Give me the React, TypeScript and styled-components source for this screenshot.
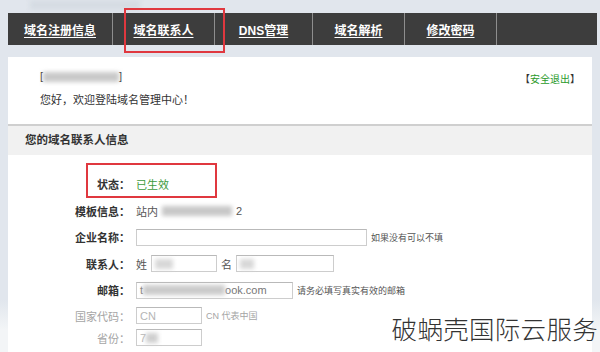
import React from "react"
import styled, { createGlobalStyle } from "styled-components"

const GlobalStyle = createGlobalStyle`
  html, body {
    margin: 0;
    padding: 0;
  }
  body {
    width: 600px;
    height: 352px;
    overflow: hidden;
    background: linear-gradient(#e1e6ed 0, #e1e6ed 300px, #f3f5f7 330px);
    font-family: "Liberation Sans", "Noto Sans CJK SC", sans-serif;
    color: #333;
  }
`

const Page = styled.div`
  position: relative;
  width: 600px;
  height: 352px;
  overflow: hidden;
`

const TopStrip = styled.div`
  height: 13px;
  padding-left: 30px;
  font-size: 9px;
  line-height: 9px;
  color: #c4cad2;
`

const Blur = styled.span<{ $w?: number; $tone?: string }>`
  display: inline-block;
  vertical-align: middle;
  width: ${(p) => p.$w ?? 40}px;
  height: 10px;
  background: ${(p) => p.$tone ?? "#cfcfcf"};
  filter: blur(2px);
`

const NavWrap = styled.div`
  position: relative;
  padding: 0 3px 0 8px;
`

const Nav = styled.nav`
  display: grid;
  grid-template-columns: 105px 102px 98px 92px 92px 1fr;
  height: 32px;
  background: #3d3d3d;
`

const NavItem = styled.a`
  display: flex;
  align-items: center;
  justify-content: center;
  border-right: 1px solid #8e8e8e;
  color: #fff;
  font-size: 12px;
  font-weight: bold;
  text-decoration: underline;
  text-underline-offset: 2px;
`

const NavFill = styled.div``

const Highlight = styled.div<{ $left: number; $top: number; $w: number; $h: number }>`
  position: absolute;
  left: ${(p) => p.$left}px;
  top: ${(p) => p.$top}px;
  width: ${(p) => p.$w}px;
  height: ${(p) => p.$h}px;
  box-sizing: border-box;
  border: 2px solid #e0383f;
  pointer-events: none;
`

const Band = styled.div`
  height: 12px;
`

const Welcome = styled.section`
  display: flex;
  justify-content: space-between;
  align-items: flex-start;
  height: 67px;
  margin: 0 8px;
  padding: 12px 12px 0 32px;
  box-sizing: border-box;
  background: #fff;
  font-size: 11px;
  line-height: 14px;
`

const Greeting = styled.div`
  display: flex;
  flex-direction: column;
  gap: 10px;
`

const Logout = styled.div`
  margin-top: 4px;
  font-size: 10px;
  color: #333;
`

const LogoutLink = styled.span`
  color: #2a9a2a;
`

const Panel = styled.section`
  position: relative;
  margin: 0 8px;
  background: #fff;
  border-top: 2px solid #cfcfcf;
`

const PanelHead = styled.h2`
  margin: 0;
  height: 29px;
  padding-left: 17px;
  background: #f1f1f1;
  font-size: 11.5px;
  font-weight: bold;
  line-height: 29px;
  color: #333;
`

const Form = styled.div`
  padding: 16px 0 4px;
`

const Row = styled.div<{ $h?: number }>`
  display: grid;
  grid-template-columns: 122px 1fr;
  column-gap: 6px;
  align-items: center;
  height: ${(p) => p.$h ?? 26.5}px;
  font-size: 11px;
`

const Label = styled.div<{ $muted?: boolean }>`
  text-align: right;
  font-weight: ${(p) => (p.$muted ? "normal" : "bold")};
  color: ${(p) => (p.$muted ? "#a5a5a5" : "#333")};
`

const Value = styled.div`
  display: flex;
  align-items: center;
  gap: 4px;
  color: #555;
`

const Ok = styled.span`
  color: #3d9a3d;
`

const Field = styled.div<{ $w: number }>`
  display: flex;
  align-items: center;
  width: ${(p) => p.$w}px;
  height: 17px;
  box-sizing: border-box;
  padding-left: 3px;
  border: 1px solid #cdcdcd;
  border-top-color: #b9b9b9;
  background: #fff;
  font-size: 11px;
  color: #777;
`

const Placeholder = styled.span`
  color: #b5b5b5;
`

const Hint = styled.span<{ $muted?: boolean }>`
  font-size: 9px;
  color: ${(p) => (p.$muted ? "#a5a5a5" : "#555")};
`

const Watermark = styled.div`
  position: absolute;
  right: 2px;
  bottom: 9px;
  font-family: "Noto Sans CJK SC", sans-serif;
  font-size: 25.5px;
  font-weight: 300;
  line-height: 30px;
  color: #333;
  letter-spacing: 0.3px;
`

const navItems = ["域名注册信息", "域名联系人", "DNS管理", "域名解析", "修改密码"]

export default function App() {
  return (
    <Page>
      <GlobalStyle />
      <TopStrip>
        <Blur $w={110} $tone="#d6dce3" />
      </TopStrip>
      <NavWrap>
        <Nav>
          {navItems.map((item) => (
            <NavItem key={item}>{item}</NavItem>
          ))}
          <NavFill />
        </Nav>
        <Highlight $left={124} $top={-5} $w={101} $h={45} />
      </NavWrap>
      <Band />
      <Welcome>
        <Greeting>
          <div>
            [<Blur $w={76} $tone="#c9c9c9" />]
          </div>
          <div>您好，欢迎登陆域名管理中心！</div>
        </Greeting>
        <Logout>
          【<LogoutLink>安全退出</LogoutLink>】
        </Logout>
      </Welcome>
      <Panel>
        <PanelHead>您的域名联系人信息</PanelHead>
        <Form>
          <Row>
            <Label>状态：</Label>
            <Value>
              <Ok>已生效</Ok>
            </Value>
          </Row>
          <Row>
            <Label>模板信息：</Label>
            <Value>
              站内<Blur $w={70} $tone="#c8c8c8" />2
            </Value>
          </Row>
          <Row>
            <Label>企业名称：</Label>
            <Value>
              <Field $w={231} />
              <Hint>如果没有可以不填</Hint>
            </Value>
          </Row>
          <Row>
            <Label>联系人：</Label>
            <Value>
              姓
              <Field $w={66}>
                <Blur $w={18} $tone="#d8d8d8" />
              </Field>
              名
              <Field $w={98}>
                <Blur $w={14} $tone="#d8d8d8" />
              </Field>
            </Value>
          </Row>
          <Row>
            <Label>邮箱：</Label>
            <Value>
              <Field $w={157}>
                t<Blur $w={82} $tone="#cbcbcb" />ook.com
              </Field>
              <Hint>请务必填写真实有效的邮箱</Hint>
            </Value>
          </Row>
          <Row $h={24}>
            <Label $muted>国家代码：</Label>
            <Value>
              <Field $w={66}>
                <Placeholder>CN</Placeholder>
              </Field>
              <Hint $muted>CN 代表中国</Hint>
            </Value>
          </Row>
          <Row $h={20}>
            <Label $muted>省份：</Label>
            <Value>
              <Field $w={66}>
                <Placeholder>7</Placeholder>
                <Blur $w={12} $tone="#cfcfcf" />
              </Field>
            </Value>
          </Row>
        </Form>
        <Highlight $left={78} $top={37} $w={131} $h={35} />
      </Panel>
      <Watermark>破蜗壳国际云服务</Watermark>
    </Page>
  )
}
